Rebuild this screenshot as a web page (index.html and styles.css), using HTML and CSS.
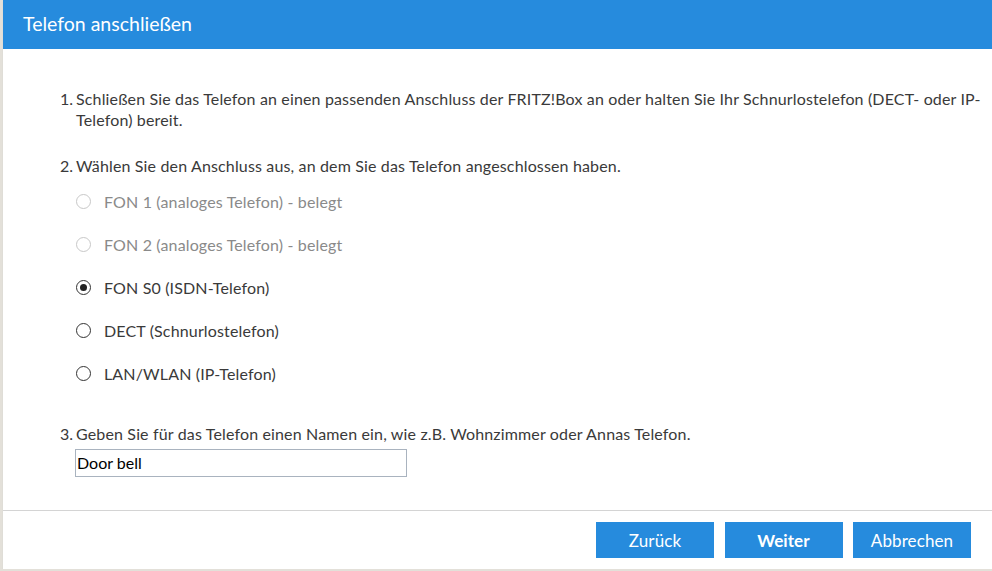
FILE: index.html
```html
<!DOCTYPE html>
<html lang="de">
<head>
<meta charset="utf-8">
<title>Telefon anschließen</title>
<link rel="stylesheet" href="styles.css">
</head>
<body>
<div class="dialog">
  <div class="header">Telefon anschließen</div>
  <div class="content">
    <div class="step">
      <span class="num">1.</span>
      <p>Schließen Sie das Telefon an einen passenden Anschluss der FRITZ!Box an oder halten Sie Ihr Schnurlostelefon (DECT- oder IP-Telefon) bereit.</p>
    </div>
    <div class="step">
      <span class="num">2.</span>
      <p>Wählen Sie den Anschluss aus, an dem Sie das Telefon angeschlossen haben.</p>
    </div>
    <div class="options">
      <label class="option disabled"><span class="radio"></span>FON 1 (analoges Telefon) - belegt</label>
      <label class="option disabled"><span class="radio"></span>FON 2 (analoges Telefon) - belegt</label>
      <label class="option"><span class="radio checked"></span>FON S0 (ISDN-Telefon)</label>
      <label class="option"><span class="radio"></span>DECT (Schnurlostelefon)</label>
      <label class="option"><span class="radio"></span>LAN/WLAN (IP-Telefon)</label>
    </div>
    <div class="step step3">
      <span class="num">3.</span>
      <p>Geben Sie für das Telefon einen Namen ein, wie z.B. Wohnzimmer oder Annas Telefon.</p>
    </div>
    <div class="field"><span class="input">Door bell</span></div>
  </div>
  <div class="footer">
    <button class="btn">Zurück</button>
    <button class="btn primary">Weiter</button>
    <button class="btn">Abbrechen</button>
  </div>
</div>
</body>
</html>
```
FILE: styles.css
```css
html, body {
  margin: 0;
  padding: 0;
  background: #e3e0d9;
}
body {
  font-family: "Lato", "Open Sans", sans-serif;
  color: #3a3a3a;
}
.dialog {
  margin-left: 3px;
  width: 989px;
  height: 569px;
  background: #fff;
  box-shadow: 0 2px 1px #d0d0d0;
  display: flex;
  flex-direction: column;
  overflow: hidden;
}
.header {
  flex: none;
  height: 49px;
  background: #268bdd;
  color: #fff;
  font-size: 19.5px;
  line-height: 48px;
  padding-left: 20px;
  position: relative;
}
.header::before {
  content: "";
  position: absolute;
  left: -3px;
  top: 0;
  width: 3px;
  height: 49px;
  background: #1a74c6;
}
.content {
  flex: 1;
  min-height: 0;
  padding: 39px 4px 0 57px;
  font-size: 16px;
  letter-spacing: 0.15px;
}
.step {
  display: flex;
  line-height: 21px;
}
.step .num {
  width: 16px;
  flex: none;
  letter-spacing: 0;
}
.step p {
  margin: 0;
}
.step + .step {
  margin-top: 25px;
}
.options {
  display: flex;
  flex-direction: column;
  padding-left: 16px;
  margin-top: 4px;
}
.option {
  display: flex;
  align-items: center;
  height: 43px;
}
.option.disabled {
  color: #8a8a8a;
}
.radio {
  width: 13px;
  height: 13px;
  border: 1px solid #333;
  border-radius: 50%;
  margin-right: 13px;
  box-sizing: content-box;
  position: relative;
  flex: none;
}
.option.disabled .radio {
  border-color: #c8c8c8;
}
.radio.checked::after {
  content: "";
  position: absolute;
  left: 3px;
  top: 3px;
  width: 7px;
  height: 7px;
  border-radius: 50%;
  background: #222;
}
.step.step3 {
  margin-top: 28px;
}
.field {
  padding-left: 15px;
  margin-top: 5px;
}
.input {
  display: block;
  width: 329px;
  height: 26px;
  border: 1px solid #a9b3bf;
  padding-left: 1px;
  line-height: 26px;
  color: #000;
  font-size: 16px;
  letter-spacing: 0;
}
.footer {
  flex: none;
  height: 47px;
  border-top: 1px solid #d4d4d4;
  display: flex;
  justify-content: flex-end;
  align-items: flex-start;
  gap: 10.5px;
  padding: 11px 21px 0 0;
}
.btn {
  width: 118px;
  height: 36px;
  background: #268bdd;
  border: 0;
  color: #fff;
  font-family: inherit;
  font-size: 17px;
  letter-spacing: 0.1px;
  padding: 0;
}
.btn.primary {
  font-weight: bold;
}
```
